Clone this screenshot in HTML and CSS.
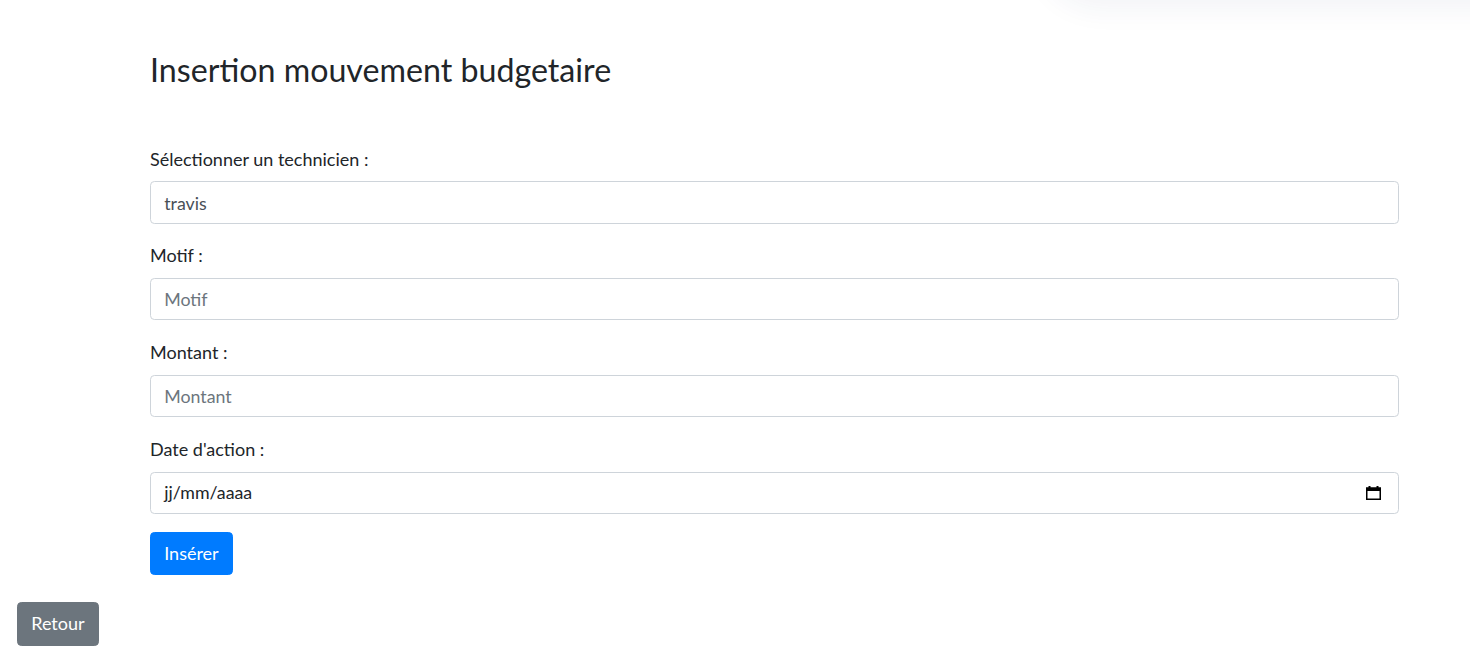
FILE: index.html
```html
<!DOCTYPE html>
<html lang="fr">
<head>
<meta charset="utf-8">
<title>Insertion mouvement budgetaire</title>
<link rel="stylesheet" href="styles.css">
</head>
<body>
<div class="top-shadow"></div>
<main class="container">
  <h2 class="title">Insertion mouvement budgetaire</h2>
  <form class="form">
    <div class="form-group">
      <label class="label" for="tech">Sélectionner un technicien :</label>
      <input class="form-control value" id="tech" type="text" value="travis">
    </div>
    <div class="form-group">
      <label class="label" for="motif">Motif :</label>
      <input class="form-control" id="motif" type="text" placeholder="Motif">
    </div>
    <div class="form-group">
      <label class="label" for="montant">Montant :</label>
      <input class="form-control" id="montant" type="text" placeholder="Montant">
    </div>
    <div class="form-group">
      <label class="label">Date d'action :</label>
      <div class="form-control date-control">
        <span class="date-text">jj/mm/aaaa</span>
        <svg class="cal-icon" width="15" height="15" viewBox="0 0 15 15" aria-hidden="true">
          <rect x="2.5" y="1" width="2" height="3" fill="#000"/>
          <rect x="10.5" y="1" width="2" height="3" fill="#000"/>
          <rect x="0.75" y="3" width="13.5" height="11.25" fill="none" stroke="#000" stroke-width="1.5"/>
          <rect x="0.75" y="3" width="13.5" height="3" fill="#000"/>
        </svg>
      </div>
    </div>
    <button type="button" class="btn btn-primary">Insérer</button>
  </form>
</main>
<div class="footer">
  <button type="button" class="btn btn-secondary">Retour</button>
</div>
</body>
</html>
```

FILE: styles.css
```css
* { box-sizing: border-box; }

html, body {
  margin: 0;
  padding: 0;
  background: #fff;
}

body {
  font-family: "Lato", "Noto Sans", "Liberation Sans", sans-serif;
  font-size: 18px;
  line-height: 1.6;
  color: #212529;
  position: relative;
  min-height: 664px;
}

.top-shadow {
  position: absolute;
  top: -70px;
  left: 1040px;
  width: 520px;
  height: 70px;
  border-radius: 0 0 40px 60px;
  box-shadow: 0 8px 30px rgba(40, 50, 110, 0.06);
}

.container {
  padding: 51px 71px 0 150px;
}

.title {
  margin: 0 0 55px;
  font-size: 32.2px;
  font-weight: 400;
  line-height: 1.2;
  color: #212529;
}

.form-group {
  display: flex;
  flex-direction: column;
  margin-bottom: 17.6px;
}

.label {
  display: block;
  margin-bottom: 8.8px;
  line-height: 28px;
}

.form-control {
  display: block;
  width: 100%;
  height: 42.3px;
  padding: 6.6px 13.2px;
  font-family: inherit;
  font-size: 17.8px;
  line-height: 1.5;
  color: #495057;
  background: #fff;
  border: 1px solid #ced4da;
  border-radius: 4.4px;
  outline: none;
}

.form-control::placeholder {
  color: #6c757d;
  opacity: 1;
}

.date-control {
  display: flex;
  align-items: center;
  justify-content: space-between;
  color: #212529;
  padding-right: 17px;
}

.cal-icon {
  display: block;
  flex: none;
}

.btn {
  display: inline-block;
  font-family: inherit;
  font-size: 18px;
  line-height: 1.55;
  padding: 6.6px 13.2px;
  border: 1px solid transparent;
  border-radius: 4.4px;
  color: #fff;
  cursor: pointer;
}

.btn-primary {
  background: #007bff;
  border-color: #007bff;
  margin-top: 1px;
}

.btn-secondary {
  background: #6c757d;
  border-color: #6c757d;
}

.footer {
  padding: 27px 0 0 17px;
}
```
